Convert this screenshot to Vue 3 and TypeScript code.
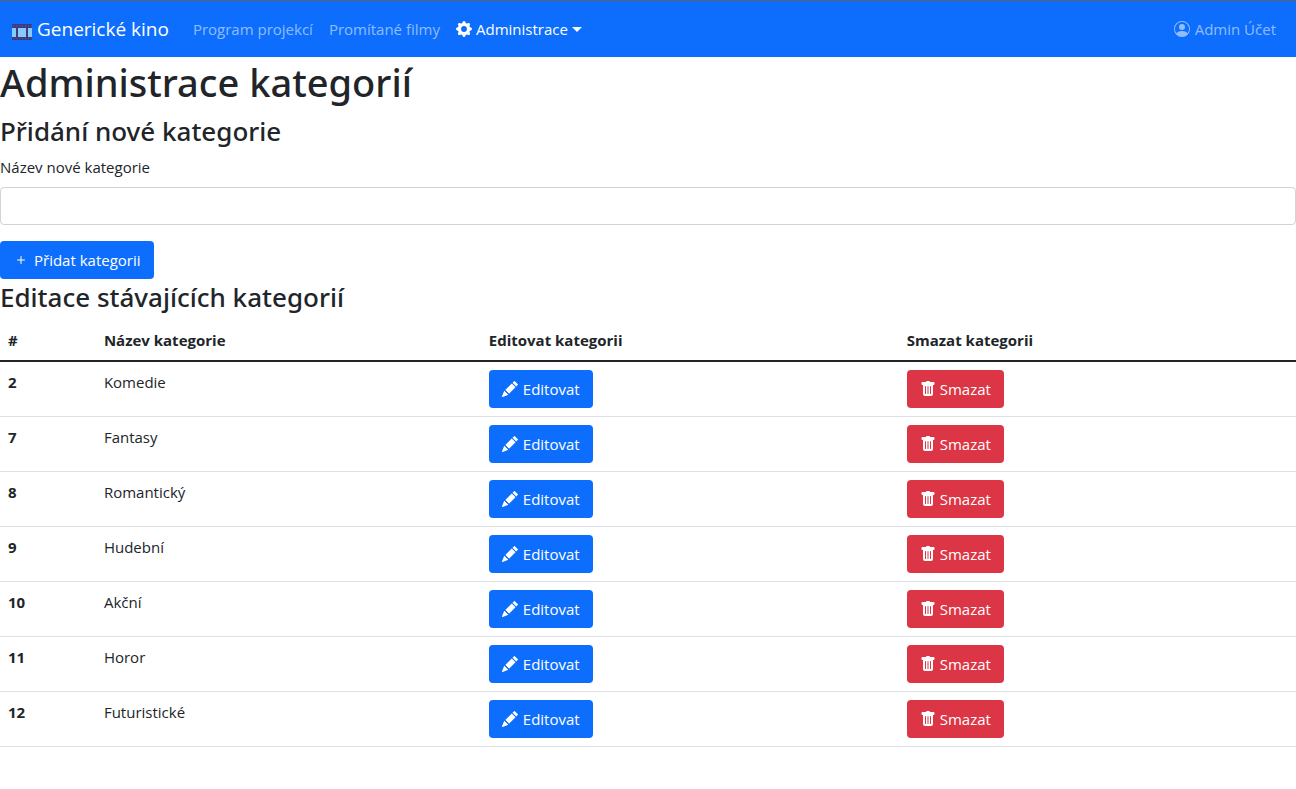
<script setup lang="ts">
import { ref } from 'vue'

interface Category {
  id: number
  name: string
}

const newName = ref('')
const categories = ref<Category[]>([
  { id: 2, name: 'Komedie' },
  { id: 7, name: 'Fantasy' },
  { id: 8, name: 'Romantický' },
  { id: 9, name: 'Hudební' },
  { id: 10, name: 'Akční' },
  { id: 11, name: 'Horor' },
  { id: 12, name: 'Futuristické' },
])

function addCategory(): void {
  const name = newName.value.trim()
  if (!name) return
  const id = Math.max(0, ...categories.value.map((c) => c.id)) + 1
  categories.value.push({ id, name })
  newName.value = ''
}

function removeCategory(id: number): void {
  categories.value = categories.value.filter((c) => c.id !== id)
}
</script>

<template>
  <header class="navbar">
    <a class="brand" href="#">
      <svg class="film" viewBox="0 0 20 16" aria-hidden="true">
        <path fill="#413a76" d="M0 0h20v16H0z" />
        <path fill="#83cbff" d="M0 4h4v9H0zM6 4h8v9H6zM16 4h4v9h-4z" />
        <path fill="#2a5cc0" d="M1 1h1v2H1zM4 1h1v2H4zM7 1h1v2H7zM10 1h1v2h-1zM13 1h1v2h-1zM16 1h1v2h-1zM19 1h1v2h-1zM1 14h1v1H1zM4 14h1v1H4zM7 14h1v1H7zM10 14h1v1h-1zM13 14h1v1h-1zM16 14h1v1h-1zM19 14h1v1h-1z" />
      </svg>
      <span>Generické kino</span>
    </a>
    <nav class="links">
      <a class="link" href="#">Program projekcí</a>
      <a class="link" href="#">Promítané filmy</a>
      <a class="link active" href="#">
        <svg class="icon" viewBox="0 0 16 16" aria-hidden="true">
          <path d="M9.405 1.05c-.413-1.4-2.397-1.4-2.81 0l-.1.34a1.464 1.464 0 0 1-2.105.872l-.31-.17c-1.283-.698-2.686.705-1.987 1.987l.169.311c.446.82.023 1.841-.872 2.105l-.34.1c-1.4.413-1.4 2.397 0 2.81l.34.1a1.464 1.464 0 0 1 .872 2.105l-.17.31c-.698 1.283.705 2.686 1.987 1.987l.311-.169a1.464 1.464 0 0 1 2.105.872l.1.34c.413 1.4 2.397 1.4 2.81 0l.1-.34a1.464 1.464 0 0 1 2.105-.872l.31.17c1.283.698 2.686-.705 1.987-1.987l-.169-.311a1.464 1.464 0 0 1 .872-2.105l.34-.1c1.4-.413 1.4-2.397 0-2.81l-.34-.1a1.464 1.464 0 0 1-.872-2.105l.17-.31c.698-1.283-.705-2.686-1.987-1.987l-.311.169a1.464 1.464 0 0 1-2.105-.872l-.1-.34zM8 10.93a2.929 2.929 0 1 1 0-5.86 2.929 2.929 0 0 1 0 5.858z" />
        </svg>
        <span>Administrace</span>
        <span class="caret"></span>
      </a>
    </nav>
    <a class="link account" href="#">
      <svg class="icon" viewBox="0 0 16 16" aria-hidden="true">
        <path d="M11 6a3 3 0 1 1-6 0 3 3 0 0 1 6 0z" />
        <path fill-rule="evenodd" d="M0 8a8 8 0 1 1 16 0A8 8 0 0 1 0 8zm8-7a7 7 0 0 0-5.468 11.37C3.242 11.226 4.805 10 8 10s4.757 1.225 5.468 2.37A7 7 0 0 0 8 1z" />
      </svg>
      <span>Admin Účet</span>
    </a>
  </header>

  <main>
    <h1>Administrace kategorií</h1>
    <h2>Přidání nové kategorie</h2>
    <form @submit.prevent="addCategory">
      <label for="category-name">Název nové kategorie</label>
      <input id="category-name" v-model="newName" type="text" />
      <button class="btn" type="submit">
        <svg class="icon" viewBox="0 0 16 16" aria-hidden="true">
          <path d="M8 4a.5.5 0 0 1 .5.5v3h3a.5.5 0 0 1 0 1h-3v3a.5.5 0 0 1-1 0v-3h-3a.5.5 0 0 1 0-1h3v-3A.5.5 0 0 1 8 4z" />
        </svg>
        <span>Přidat kategorii</span>
      </button>
    </form>

    <h2>Editace stávajících kategorií</h2>
    <table>
      <colgroup>
        <col class="col-id" />
        <col class="col-name" />
        <col class="col-edit" />
        <col />
      </colgroup>
      <thead>
        <tr>
          <th scope="col">#</th>
          <th scope="col">Název kategorie</th>
          <th scope="col">Editovat kategorii</th>
          <th scope="col">Smazat kategorii</th>
        </tr>
      </thead>
      <tbody>
        <tr v-for="category in categories" :key="category.id">
          <th scope="row">{{ category.id }}</th>
          <td>{{ category.name }}</td>
          <td>
            <button class="btn" type="button">
              <svg class="icon" viewBox="0 0 16 16" aria-hidden="true">
                <path d="M12.854.146a.5.5 0 0 0-.707 0L10.5 1.793 14.207 5.5l1.647-1.646a.5.5 0 0 0 0-.708l-3-3zm.646 6.061L9.793 2.5 3.293 9H3.5a.5.5 0 0 1 .5.5v.5h.5a.5.5 0 0 1 .5.5v.5h.5a.5.5 0 0 1 .5.5v.5h.5a.5.5 0 0 1 .5.5v.207l6.5-6.5zm-7.468 7.468A.5.5 0 0 1 6 13.5V13h-.5a.5.5 0 0 1-.5-.5V12h-.5a.5.5 0 0 1-.5-.5V11h-.5a.5.5 0 0 1-.5-.5V10h-.5a.499.499 0 0 1-.175-.032l-.179.178a.5.5 0 0 0-.11.168l-2 5a.5.5 0 0 0 .65.65l5-2a.5.5 0 0 0 .168-.11l.178-.178z" />
              </svg>
              <span>Editovat</span>
            </button>
          </td>
          <td>
            <button class="btn danger" type="button" @click="removeCategory(category.id)">
              <svg class="icon" viewBox="0 0 16 16" aria-hidden="true">
                <path d="M2.5 1a1 1 0 0 0-1 1v1a1 1 0 0 0 1 1H3v9a2 2 0 0 0 2 2h6a2 2 0 0 0 2-2V4h.5a1 1 0 0 0 1-1V2a1 1 0 0 0-1-1H10a1 1 0 0 0-1-1H7a1 1 0 0 0-1 1H2.5zm3 4a.5.5 0 0 1 .5.5v7a.5.5 0 0 1-1 0v-7a.5.5 0 0 1 .5-.5zM8 5a.5.5 0 0 1 .5.5v7a.5.5 0 0 1-1 0v-7A.5.5 0 0 1 8 5zm3 .5v7a.5.5 0 0 1-1 0v-7a.5.5 0 0 1 1 0z" />
              </svg>
              <span>Smazat</span>
            </button>
          </td>
        </tr>
      </tbody>
    </table>
  </main>
</template>

<style>
body {
  background: #fff;
  color: #212529;
  font-family: "Segoe UI", "Open Sans", "Noto Sans", sans-serif;
  font-size: 15px;
  line-height: 24px;
}
</style>

<style scoped>
.navbar {
  display: flex;
  align-items: center;
  height: 56px;
  padding: 0 12px;
  border-top: 1px solid #5f6368;
  background: #0d6efd;
}

.brand {
  display: flex;
  align-items: center;
  gap: 5px;
  margin-right: 16px;
  color: #fff;
  font-size: 19px;
  line-height: 30px;
  text-decoration: none;
}

.film {
  width: 20px;
  height: 16px;
  margin-top: 6px;
}

.links {
  display: flex;
}

.link {
  display: flex;
  align-items: center;
  gap: 4px;
  padding: 8px;
  color: rgba(255, 255, 255, 0.55);
  text-decoration: none;
}

.link.active {
  color: #fff;
}

.account {
  gap: 5px;
  margin-left: auto;
}

.icon {
  flex: none;
  width: 16px;
  height: 16px;
  fill: currentColor;
}

.caret {
  border: 5px solid transparent;
  border-top-color: currentColor;
  border-bottom: 0;
}

h1,
h2 {
  margin: 0 0 6px;
  font-family: "Segoe UI", "Noto Sans", "Open Sans", sans-serif;
  font-weight: 500;
}

h1 {
  font-size: 38px;
  line-height: 50px;
}

h2 {
  font-size: 26px;
  line-height: 36px;
}

label {
  display: block;
  margin-bottom: 8px;
}

input {
  display: block;
  box-sizing: border-box;
  width: 100%;
  height: 38px;
  margin: 0 0 16px;
  padding: 6px 12px;
  border: 1px solid #ced4da;
  border-radius: 4px;
  background: #fff;
  color: inherit;
  font: inherit;
}

.btn {
  display: flex;
  align-items: center;
  gap: 5px;
  height: 38px;
  padding: 0 13px;
  border: 0;
  border-radius: 4px;
  background: #0d6efd;
  color: #fff;
  font: inherit;
  cursor: pointer;
}

.btn.danger {
  gap: 4px;
  background: #dc3545;
}

table {
  width: 100%;
  border-collapse: collapse;
  table-layout: fixed;
}

.col-id {
  width: 7.4%;
}

.col-name {
  width: 29.7%;
}

.col-edit {
  width: 32.25%;
}

th,
td {
  padding: 8px;
  border-bottom: 1px solid #dee2e6;
  text-align: left;
  vertical-align: top;
}

th {
  font-weight: 700;
}

thead th {
  border-bottom: 2px solid #212529;
  padding-top: 7px;
}
</style>
